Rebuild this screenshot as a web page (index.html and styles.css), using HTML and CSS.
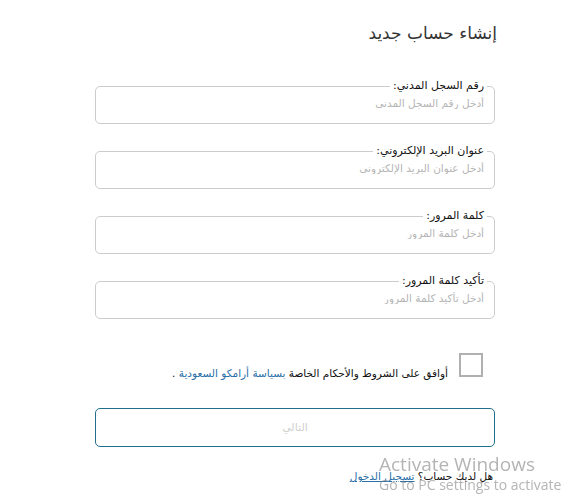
FILE: index.html
```html
<!DOCTYPE html>
<html lang="ar" dir="rtl">
<head>
  <meta charset="UTF-8" />
  <meta name="viewport" content="width=device-width, initial-scale=1.0"/>
  <title>إنشاء حساب جديد</title>
  <link rel="stylesheet" href="styles.css">
</head>
<body>
  <div class="container">
    <h1>إنشاء حساب جديد</h1>

    <form class="registro">
      <fieldset class="campo">
        <legend>رقم السجل المدني:</legend>
        <input type="text" placeholder="أدخل رقم السجل المدني" />
      </fieldset>

      <fieldset class="campo">
        <legend>عنوان البريد الإلكتروني:</legend>
        <input type="email" placeholder="أدخل عنوان البريد الإلكتروني" />
      </fieldset>

      <fieldset class="campo">
        <legend>كلمة المرور:</legend>
        <input type="password" placeholder="أدخل كلمة المرور" />
      </fieldset>

      <fieldset class="campo">
        <legend>تأكيد كلمة المرور:</legend>
        <input type="password" placeholder="أدخل تأكيد كلمة المرور" />
      </fieldset>

      <div class="terminos">
        <span class="check"></span>
        <p>أوافق على الشروط والأحكام الخاصة <a href="#">بسياسة أرامكو السعودية</a> .</p>
      </div>

      <button type="button" class="btn">التالي</button>

      <p class="login">هل لديك حساب؟ <a href="#">تسجيل الدخول</a></p>
    </form>
  </div>

  <div class="activar" dir="ltr">
    <div class="activar-titulo">Activate Windows</div>
    <div class="activar-texto">Go to PC settings to activate</div>
  </div>
</body>
</html>
```

FILE: styles.css
```css
body {
  margin: 0;
  background: #fff;
  font-family: "DejaVu Sans", "Liberation Sans", sans-serif;
  color: #222;
}
.container {
  width: 400px;
  margin: 0 76px 0 0;
}
h1 {
  font-size: 17px;
  font-weight: normal;
  margin: 0 -2px 0 0;
  padding-top: 23px;
  box-sizing: border-box;
  height: 79px;
  color: #333;
}
.campo {
  border: 1px solid #ccc;
  border-radius: 5px;
  margin: 0 0 20px 0;
  padding: 0 10px 12px 10px;
}
.campo:last-of-type {
  margin-bottom: 0;
}
.campo legend {
  font-size: 11px;
  color: #111;
  padding: 0 3px;
  margin-right: -3px;
  line-height: 14px;
}
.campo input {
  display: block;
  box-sizing: border-box;
  width: 100%;
  height: 18px;
  border: none;
  outline: none;
  font-size: 10.5px;
  font-family: inherit;
  padding: 2px 0 0 0;
  text-align: right;
  direction: rtl;
  background: transparent;
}
.campo input::placeholder {
  color: #b5b5b5;
}
.terminos {
  display: flex;
  align-items: flex-end;
  gap: 11px;
  margin: 34px 12px 0 0;
}
.check {
  width: 20px;
  height: 20px;
  border: 2px solid #b0b0b0;
  flex: none;
}
.terminos p {
  margin: 0;
  font-size: 10.5px;
  color: #111;
  position: relative;
  top: 2px;
}
.terminos a {
  color: #2a6fa8;
  text-decoration: none;
}
.btn {
  display: block;
  width: 100%;
  height: 39px;
  margin-top: 31px;
  border: 1.5px solid #236e8d;
  border-radius: 5px;
  background: #fff;
  color: #d0d0d0;
  font-size: 11px;
  font-family: inherit;
}
.login {
  margin: 23px 2px 0 0;
  font-size: 10.5px;
  color: #111;
}
.login a {
  color: #2a6fa8;
}
.activar {
  position: fixed;
  left: 379px;
  top: 452px;
  color: rgba(140, 140, 140, 0.65);
  font-family: "Open Sans", "Noto Sans", sans-serif;
  pointer-events: none;
}
.activar-titulo {
  font-size: 19px;
  line-height: 24px;
}
.activar-texto {
  font-size: 14px;
  line-height: 18px;
}
```
